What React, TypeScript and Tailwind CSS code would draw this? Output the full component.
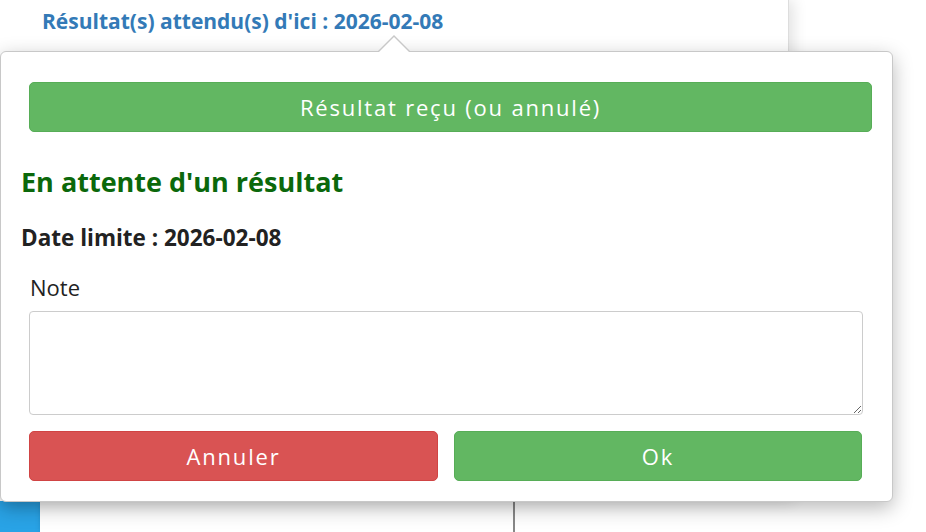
import React from "react";

export default function App() {
    return (
        <div className="relative w-[926px] h-[532px] overflow-hidden bg-white" style={{ fontFamily: '"Open Sans", "Noto Sans", sans-serif' }}>
            {/* page behind */}
            <div className="flex flex-col h-full">
                <div className="w-[789px] h-[501px] bg-white shadow-[4px_0_14px_rgba(0,0,0,0.12)] border-r border-[#ddd] relative">
                    <div className="pl-[42px] text-[21px] font-bold text-[#337ab7] whitespace-nowrap">
                        <p className="-mt-[28px] leading-[30px]">Type(s) de résultat(s) : sang | urine, culture(s)</p>
                        <p className="leading-[38px]">Résultat(s) attendu(s) d'ici : 2026-02-08</p>
                    </div>
                </div>
                <div className="flex flex-1">
                    <div className="w-[40px] bg-[#29a3e6]"></div>
                    <div className="w-[475px] bg-white border-r-2 border-[#888] shadow-[2px_0_6px_rgba(0,0,0,0.25)]"></div>
                    <div className="flex-1 bg-white"></div>
                </div>
            </div>

            {/* popover */}
            <div className="absolute left-0 top-[51px] w-[893px] h-[451px] bg-white border border-[#c8c8c8] rounded-[6px] shadow-[0_6px_20px_rgba(0,0,0,0.28)]">
                <div className="absolute left-[376px] -top-[17px] w-0 h-0 border-x-[17px] border-x-transparent border-b-[17px] border-b-[#c8c8c8]"></div>
                <div className="absolute left-[377px] -top-[15px] w-0 h-0 border-x-[16px] border-x-transparent border-b-[16px] border-b-white"></div>

                <div className="pt-[30px] pl-[28px] pr-[21px]">
                    <button className="w-[843px] h-[50px] rounded-[5px] bg-[#62b762] border border-[#57ad57] text-white text-[22px] tracking-[1.8px]">
                        Résultat reçu (ou annulé)
                    </button>
                </div>
                <h2 className="pl-[20px] mt-[32px] text-[27px] font-bold text-[#0b680b] leading-[36px]">En attente d'un résultat</h2>
                <p className="pl-[20px] mt-[23px] text-[22.5px] font-bold text-[#222] leading-[30px]">Date limite : 2026-02-08</p>
                <div className="pl-[28px] pr-[30px] mt-[19px]">
                    <label className="block pl-[1px] text-[22px] text-[#222] leading-[30px]">Note</label>
                    <textarea className="block mt-[9px] w-[834px] h-[104px] border border-[#ccc] rounded-[4px] resize-y outline-none"></textarea>
                    <div className="flex gap-[16px] mt-[16px]">
                        <button className="w-[410px] h-[50px] rounded-[5px] bg-[#d95353] border border-[#d04444] text-white text-[22px] tracking-[1.8px]">Annuler</button>
                        <button className="w-[409px] h-[50px] rounded-[5px] bg-[#62b762] border border-[#57ad57] text-white text-[22px] tracking-[1.8px]">Ok</button>
                    </div>
                </div>
            </div>
        </div>
    );
}
